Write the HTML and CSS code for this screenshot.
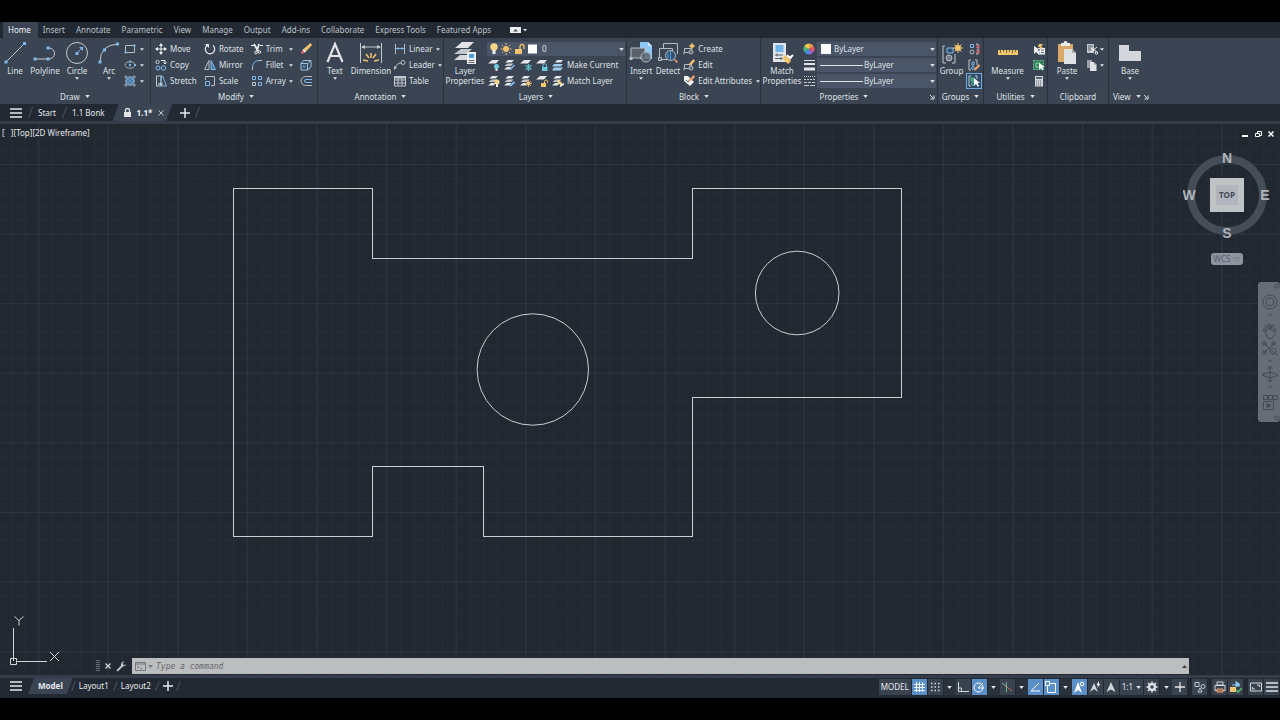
FILE: index.html
```html
<!DOCTYPE html>
<html lang="en">
<head>
<meta charset="utf-8">
<title>1.1 - CAD drawing</title>
<link rel="stylesheet" href="styles.css">
</head>
<body>
<svg class="defs" aria-hidden="true">
  <symbol id="caret" viewBox="0 0 6 4"><path d="M0 0h6L3 4z" fill="currentColor"/></symbol>
  <symbol id="launch" viewBox="0 0 6 6"><path d="M1 1l3 3M5 1.500V5H1.500" fill="none" stroke="currentColor"/></symbol>
  <symbol id="menu" viewBox="0 0 12 10"><path d="M0 1h12M0 5h12M0 9h12" stroke="currentColor" stroke-width="1.500"/></symbol>
  <symbol id="plus" viewBox="0 0 10 10"><path d="M5 0v10M0 5h10" stroke="currentColor" stroke-width="1.500"/></symbol>
  <symbol id="sheets" viewBox="0 0 12 12"><path d="M4 1h6L7.500 3.500H1z" fill="#e6e8ea"/><path d="M3.500 4.500h6L7 7H.5z" fill="#c3c7cd"/><path d="M3 8h4.500l-2 2.500H0z" fill="#e6e8ea"/></symbol>
  <symbol id="blk" viewBox="0 0 12 12"><path d="M1.500 5.500h7v4h-7zM1 9v2.500" fill="none" stroke="#b8bdc4"/><circle cx="8" cy="9" r="2" fill="#59616d" stroke="#b8bdc4"/></symbol>
</svg>

<nav class="ribbon-tabs" aria-label="Ribbon">
  <button class="rtab active">Home</button><button class="rtab">Insert</button><button class="rtab">Annotate</button><button class="rtab">Parametric</button><button class="rtab">View</button><button class="rtab">Manage</button><button class="rtab">Output</button><button class="rtab">Add-ins</button><button class="rtab">Collaborate</button><button class="rtab">Express Tools</button><button class="rtab">Featured Apps</button>
  <button class="minimize" aria-label="Minimize ribbon"><svg width="17" height="6" viewBox="0 0 17 6"><path d="M0 0h11v6H0z" fill="#eceef0"/><path d="M3 4.500h5L5.500 2z" fill="#4b535f"/><path d="M13 2h4l-2 2.500z" fill="#e0e3e7"/></svg></button>
</nav>

<header class="ribbon">
  <section class="panel draw">
    <div class="tools">
      <button class="big"><svg width="24" height="24" viewBox="0 0 24 24"><path d="M3 21L21 3" stroke="#c3c8ce"/><path d="M1.500 19.500h3v3h-3zM20 1h3v3h-3z" fill="#7db9ec"/></svg><span>Line</span></button>
      <button class="big"><svg width="24" height="24" viewBox="0 0 24 24"><path d="M2 18h14a5.500 5.500 0 0 0 0-11" fill="none" stroke="#c3c8ce"/><path d="M.5 16.500h3v3h-3zM13.500 16.500h3v3h-3zM13.500 5.500h3v3h-3z" fill="#7db9ec"/></svg><span>Polyline</span></button>
      <button class="big wide"><svg width="24" height="24" viewBox="0 0 24 24"><circle cx="12" cy="12" r="10.500" fill="none" stroke="#c3c8ce"/><path d="M12 12l5-5" stroke="#7db9ec"/><path d="M10.500 11h3v3h-3zM14 6h4v4z" fill="#7db9ec"/></svg><span>Circle</span><svg class="caret"><use href="#caret"/></svg></button>
      <button class="big"><svg width="24" height="24" viewBox="0 0 24 24"><path d="M3 21Q3 4 21 3" fill="none" stroke="#c3c8ce"/><path d="M1.500 19.500h3v3h-3zM6 7.500h3v3H6zM19 1.500h3v3h-3z" fill="#7db9ec"/></svg><span>Arc</span><svg class="caret"><use href="#caret"/></svg></button>
      <div class="stack">
        <button class="small" aria-label="Rectangle"><svg class="ic" viewBox="0 0 12 12"><path d="M1.500 2.500h9v7h-9z" fill="none" stroke="#b8bdc4"/><path d="M.5 8.500h2v2h-2zM9.500 1.500h2v2h-2z" fill="#7db9ec"/></svg><svg class="caret end"><use href="#caret"/></svg></button>
        <button class="small" aria-label="Ellipse"><svg class="ic" viewBox="0 0 12 12"><ellipse cx="6" cy="6" rx="5" ry="3.200" fill="none" stroke="#a3a9b2"/><path d="M5 5h2v2H5zM10 5h2v2h-2zM5 1.500h2v2H5z" fill="#7db9ec"/></svg><svg class="caret end"><use href="#caret"/></svg></button>
        <button class="small" aria-label="Hatch"><svg class="ic" viewBox="0 0 12 12"><path d="M2 2h8v8H2z" fill="#4a7ba8"/><path d="M1 1l10 10M1 5l6 6M5 1l6 6M11 1L1 11M7 1L1 7M11 5l-6 6" stroke="#76aad8" stroke-width=".6"/><path d="M2 0v12M10 0v12M0 2h12M0 10h12" stroke="#a3a9b2" stroke-width=".8"/></svg><svg class="caret end"><use href="#caret"/></svg></button>
      </div>
    </div>
    <button class="title">Draw<svg class="caret"><use href="#caret"/></svg></button>
  </section>

  <section class="panel modify">
    <div class="tools">
      <div class="stack">
        <button class="small"><svg class="ic" viewBox="0 0 12 12"><path d="M6 1v10M1 6h10" stroke="#eef0f2"/><path d="M6 0l2 3H4zM6 12l2-3H4zM0 6l3-2v4zM12 6L9 4v4z" fill="#eef0f2"/></svg>Move</button>
        <button class="small"><svg class="ic" viewBox="0 0 12 12"><circle cx="2.500" cy="3" r="1.700" fill="none" stroke="#c3c8ce"/><circle cx="3" cy="9" r="2" fill="none" stroke="#7db9ec"/><circle cx="8.500" cy="9" r="2.200" fill="none" stroke="#7db9ec"/><path d="M6 1.500h4V5M8.500 3.500L10 5l1.500-1.500" fill="none" stroke="#eef0f2"/></svg>Copy</button>
        <button class="small"><svg class="ic" viewBox="0 0 12 12"><path d="M1.500 1v10H6V1z" fill="none" stroke="#c3c8ce"/><path d="M6 1h1.500l4 10H6z" fill="none" stroke="#7db9ec"/><path d="M3 9h5" stroke="#eef0f2"/></svg>Stretch</button>
      </div>
      <div class="stack">
        <button class="small"><svg class="ic" viewBox="0 0 12 12"><path d="M3 2.500a4.700 4.700 0 1 0 6 0" fill="none" stroke="#eef0f2" stroke-width="1.200"/><path d="M1 1h4v4z" fill="#eef0f2"/></svg>Rotate</button>
        <button class="small"><svg class="ic" viewBox="0 0 12 12"><path d="M5 1.500V10.500H.5z" fill="none" stroke="#b8bdc4"/><path d="M7 1.500v9h4.500z" fill="#4a7ba8" stroke="#7db9ec"/></svg>Mirror</button>
        <button class="small"><svg class="ic" viewBox="0 0 12 12"><path d="M1.500 5V1.500h9v9H7" fill="none" stroke="#b8bdc4"/><path d="M1.500 6.500h4v4h-4z" fill="none" stroke="#7db9ec"/></svg>Scale</button>
      </div>
      <div class="stack mid">
        <button class="small"><svg class="ic" viewBox="0 0 12 12"><path d="M0 2.500h3.500M9 2.500h3" stroke="#eef0f2"/><path d="M3 1l4 7M8 1L6 8" stroke="#eef0f2" stroke-width="1.700"/><circle cx="5" cy="9.500" r="1.300" fill="none" stroke="#eef0f2"/><circle cx="8.500" cy="9" r="1.300" fill="none" stroke="#eef0f2"/></svg>Trim<svg class="caret end"><use href="#caret"/></svg></button>
        <button class="small"><svg class="ic" viewBox="0 0 12 12"><path d="M1.500 11V8" stroke="#b8bdc4"/><path d="M1.500 8Q2 2 8 1.500" fill="none" stroke="#7db9ec"/><path d="M8 1.500h3" stroke="#b8bdc4"/></svg>Fillet<svg class="caret end"><use href="#caret"/></svg></button>
        <button class="small"><svg class="ic" viewBox="0 0 12 12" fill="none" stroke="#7db9ec"><path d="M1.500 1.500h3v3h-3zM7.500 1.500h3v3h-3zM7.500 7.500h3v3h-3z"/><path d="M1.500 7.500h3v3h-3z" stroke="#c3c8ce"/></svg>Array<svg class="caret end"><use href="#caret"/></svg></button>
      </div>
      <div class="stack">
        <button class="small" aria-label="Erase"><svg class="ic" viewBox="0 0 12 12"><path d="M10.500 0L12 2 6 8.500 3.500 6z" fill="#f3c46e"/><path d="M3.500 6L6 8.500 4.800 9.700 2.300 7.200z" fill="#fff"/><path d="M2.300 7.200l2.500 2.500L2 11 .8 10z" fill="#e5626a"/></svg></button>
        <button class="small" aria-label="Explode"><svg class="ic" viewBox="0 0 12 12"><path d="M1 4.500h6.500v6.500H1zM3.500 1.500H11V8M1 4.500l2.500-3M7.500 4.500l3.500-3M7.500 11L11 8" fill="none" stroke="#9cc4e6"/><path d="M2.500 6h3v3h-3z" fill="#4a7ba8"/></svg></button>
        <button class="small" aria-label="Offset"><svg class="ic" viewBox="0 0 12 12" fill="none"><path d="M12 1.500H5.500a4.500 4.500 0 0 0 0 9H12" stroke="#b8bdc4"/><path d="M12 4.500H6a1.500 1.500 0 0 0 0 3h6" stroke="#7db9ec"/></svg></button>
      </div>
    </div>
    <button class="title">Modify<svg class="caret"><use href="#caret"/></svg></button>
  </section>

  <section class="panel annotation">
    <div class="tools">
      <button class="big wide"><svg width="20" height="24" viewBox="0 0 20 24"><path d="M2.500 21L10 3l7.500 18M5 15h10" fill="none" stroke="#e2e4e7" stroke-width="2.200"/></svg><span>Text</span><svg class="caret"><use href="#caret"/></svg></button>
      <button class="big wider"><svg width="24" height="24" viewBox="0 0 24 24"><path d="M1.500 2v20M22.500 2v20M3 6h18" stroke="#c3c8ce"/><path d="M2 6l4-2v4zM22 6l-4-2v4z" fill="#c3c8ce"/><path d="M12 12v5M7 13l3 4M17 13l-3 4M4 19l5 1M20 19l-5 1" stroke="#f3c46e" stroke-width="1.500"/></svg><span>Dimension</span></button>
      <div class="stack">
        <button class="small"><svg class="ic" viewBox="0 0 12 12"><path d="M1.500 1v10M10.500 1v10" stroke="#b8bdc4"/><path d="M2 5.500h8" stroke="#7db9ec"/><path d="M2 5.500l2.500-1.500v3zM10 5.500L7.500 4v3z" fill="#7db9ec"/></svg>Linear<svg class="caret end"><use href="#caret"/></svg></button>
        <button class="small"><svg class="ic" viewBox="0 0 12 12"><path d="M1 10Q2 4 7.500 4" fill="none" stroke="#b8bdc4"/><circle cx="9" cy="3.500" r="2" fill="none" stroke="#b8bdc4"/><path d="M0 11V7l3 1.500z" fill="#b8bdc4"/></svg>Leader<svg class="caret end"><use href="#caret"/></svg></button>
        <button class="small"><svg class="ic" viewBox="0 0 12 12"><path d="M.5 1.500h11v9.500H.5zM.5 5h11M.5 8h11M4 3v8M8 3v8" fill="none" stroke="#c3c8ce"/><path d="M0 1h12v2.500H0z" fill="#c3c8ce"/></svg>Table</button>
      </div>
    </div>
    <button class="title">Annotation<svg class="caret"><use href="#caret"/></svg></button>
  </section>

  <section class="panel layers">
    <div class="tools">
      <button class="big wider"><svg width="24" height="24" viewBox="0 0 24 24"><path d="M9 1h12l-6 6H2z" fill="#e2e4e7"/><path d="M8 8h11l-5 5H1z" fill="#c3c8ce"/><path d="M7 14h8v5H1z" fill="#d6d9dd"/><path d="M14 11h9v12h-9z" fill="#eef0f2"/><path d="M16 13h5v4h-5z" fill="#4a9fe0"/><path d="M15.500 19.500h6M15.500 21.500h6" stroke="#59616d"/></svg><span>Layer<br>Properties</span></button>
      <div class="stack fill">
        <label class="combo layer-combo">
          <svg width="52" height="12" viewBox="0 0 52 12"><circle cx="5" cy="4" r="3.700" fill="#f7d488"/><path d="M3.500 7h3v4h-3z" fill="#eef0f2"/><circle cx="17" cy="6" r="3" fill="#f3c46e"/><path d="M17 0v2M17 10v2M11.500 6h2M20.500 6h2M13 2l1 1M20 9l1 1M21 2l-1 1M14 9l-1 1" stroke="#f3c46e"/><path d="M26 6h7v5h-7z" fill="#f3c46e"/><path d="M31 6V3.500a2 2 0 0 1 4 0V6" fill="none" stroke="#f3c46e" stroke-width="1.300"/><path d="M39 1.500h9v9h-9z" fill="#fff"/></svg>
          <select aria-label="Layer"><option>0</option></select><svg class="caret"><use href="#caret"/></svg>
        </label>
        <div class="row">
          <button class="small" aria-label="Layer off"><svg class="ic" viewBox="0 0 12 12"><path d="M4 1h7L8 4.500H0z" fill="#e2e4e7"/><circle cx="8.500" cy="7.500" r="2.500" fill="#6ccbe0"/><path d="M7.500 9.500h2V12h-2z" fill="#dfeff2"/></svg></button>
          <button class="small" aria-label="Isolate layer"><svg class="ic" viewBox="0 0 12 12"><use href="#sheets"/><path d="M6 11l4.500-5" stroke="#7db9ec" stroke-width="1.500"/></svg></button>
          <button class="small" aria-label="Freeze layer"><svg class="ic" viewBox="0 0 12 12"><path d="M4 1h7L8 4.500H0z" fill="#e2e4e7"/><path d="M8.500 5v7M5.500 6.500l6 4M5.500 10.500l6-4" stroke="#5cc0c4" stroke-width="1.500"/></svg></button>
          <button class="small" aria-label="Lock layer"><svg class="ic" viewBox="0 0 12 12"><path d="M4 1h7L8 4.500H0z" fill="#e2e4e7"/><path d="M6 8h5.500v4H6z" fill="#6ccbe0"/><path d="M7 8V6.500a1.700 1.700 0 0 1 3.500 0V8" fill="none" stroke="#6ccbe0"/></svg></button>
          <button class="small"><svg class="ic" viewBox="0 0 12 12"><path d="M5 1h6L9 3.500H3z" fill="#e2e4e7"/><path d="M2 5h9L8.500 7.500H0zM2 8.500h9L8.500 11.500H0z" fill="#9fd0ee"/></svg>Make Current</button>
        </div>
        <div class="row">
          <button class="small" aria-label="Turn all layers on"><svg class="ic" viewBox="0 0 12 12"><use href="#sheets"/><circle cx="9" cy="7" r="2.500" fill="#f7d488"/><path d="M8 9h2v3H8z" fill="#eef0f2"/></svg></button>
          <button class="small" aria-label="Unisolate layer"><svg class="ic" viewBox="0 0 12 12"><use href="#sheets"/><path d="M6 11l4.500-4" stroke="#7db9ec" stroke-width="2"/></svg></button>
          <button class="small" aria-label="Thaw all layers"><svg class="ic" viewBox="0 0 12 12"><use href="#sheets"/><circle cx="8.500" cy="8.500" r="2" fill="#f3c46e"/><path d="M8.500 5v7M5 8.500h7M6 6l5 5M11 6l-5 5" stroke="#f3c46e" stroke-width=".7"/></svg></button>
          <button class="small" aria-label="Unlock layer"><svg class="ic" viewBox="0 0 12 12"><path d="M4 1h7L8 4.500H0z" fill="#e2e4e7"/><path d="M5 8h5v4H5z" fill="#f3c46e"/><path d="M8.500 8V6.500a1.500 1.500 0 0 1 3 0V8" fill="none" stroke="#f3c46e"/></svg></button>
          <button class="small"><svg class="ic" viewBox="0 0 12 12"><use href="#sheets"/><path d="M6 6l4 4" stroke="#f7d488" stroke-width="2.500"/><path d="M8 11.500l4-3" stroke="#fff" stroke-width="1.500"/></svg>Match Layer</button>
        </div>
      </div>
    </div>
    <button class="title">Layers<svg class="caret"><use href="#caret"/></svg></button>
  </section>

  <section class="panel block">
    <div class="tools">
      <button class="big narrow"><svg width="24" height="24" viewBox="0 0 24 24"><path d="M11 1h8l4 4v13H11z" fill="#8cc8f4"/><path d="M19 1v4h4" fill="#d3eafa"/><path d="M2 7h14v10H2z" fill="#59616d" stroke="#b8bdc4"/><circle cx="17" cy="16" r="5" fill="#59616d" fill-opacity=".8" stroke="#b8bdc4"/><path d="M.5 16h3v3h-3z" fill="#b8bdc4"/></svg><span>Insert</span><svg class="caret"><use href="#caret"/></svg></button>
      <button class="big narrow"><svg width="24" height="24" viewBox="0 0 24 24"><path d="M7.500 7V2.500h14V13M3.500 7.500h13v11h-13z" fill="none" stroke="#b8bdc4"/><path d="M2.500 16.500h3v3h-3z" fill="#59616d" stroke="#b8bdc4"/><circle cx="14.500" cy="14.500" r="5" fill="#35506e" stroke="#b8bdc4"/><path d="M14.500 10v9M12 12v5" stroke="#4a9fe0"/><path d="M18.500 18.500l3 3" stroke="#f3a46e" stroke-width="1.500"/></svg><span>Detect</span></button>
      <div class="stack">
        <button class="small"><svg class="ic" viewBox="0 0 12 12"><use href="#blk"/><circle cx="9" cy="3" r="2" fill="#f3c46e"/><path d="M9 0v6M6 3h6" stroke="#f3c46e"/></svg>Create</button>
        <button class="small"><svg class="ic" viewBox="0 0 12 12"><use href="#blk"/><path d="M10.500 0L12 2 8 6 6 6.500V5z" fill="#f3c46e"/></svg>Edit</button>
        <button class="small"><svg class="ic" viewBox="0 0 12 12"><path d="M1 1h4l6 6-4 4-6-5z" fill="#eef0f2"/><path d="M3 5l2 2 3-4" fill="none" stroke="#59616d"/><path d="M10.500 0L12 2 8 6 6 6.500V5z" fill="#f3a46e"/></svg>Edit Attributes<svg class="caret end"><use href="#caret"/></svg></button>
      </div>
    </div>
    <button class="title">Block<svg class="caret"><use href="#caret"/></svg></button>
  </section>

  <section class="panel properties">
    <div class="tools">
      <button class="big match"><svg width="24" height="24" viewBox="0 0 24 24"><path d="M3 2h13v19H3z" fill="#e2e4e7"/><path d="M5.500 4h8v7h-8z" fill="#6db5ea"/><path d="M5 14h8M5 17.500h8M7 12.500v3M11 16v3" stroke="#59616d"/><path d="M12 17l4-3 5 6-3 3z" fill="#f3c46e"/><path d="M17 14l4 4M23 14l-3 3" stroke="#fff" stroke-width="2"/></svg><span>Match<br>Properties</span></button>
      <div class="stack fill">
        <div class="row"><svg class="ic" viewBox="0 0 12 12"><path d="M6 6V.5A5.500 5.500 0 0 1 10.800 3.200z" fill="#f39a4a"/><path d="M6 6l4.800-2.800a5.500 5.500 0 0 1 0 5.600z" fill="#e35a63"/><path d="M6 6l4.800 2.800A5.500 5.500 0 0 1 6 11.500z" fill="#9a63c9"/><path d="M6 6v5.500a5.500 5.500 0 0 1-4.800-2.700z" fill="#3f8fdd"/><path d="M6 6L1.200 8.800a5.500 5.500 0 0 1 0-5.600z" fill="#49bb7b"/><path d="M6 6L1.200 3.200A5.500 5.500 0 0 1 6 .5z" fill="#f0cf55"/></svg>
          <label class="combo"><svg width="14" height="12" viewBox="0 0 14 12"><path d="M2 1h10v10H2z" fill="#fff"/></svg><select aria-label="Object color"><option>ByLayer</option></select><svg class="caret"><use href="#caret"/></svg></label></div>
        <div class="row"><svg class="ic" viewBox="0 0 12 12" stroke="#e2e4e7"><path d="M1 1.500h11"/><path d="M1 5h11" stroke-width="2"/><path d="M1 10h11" stroke-width="3"/></svg>
          <label class="combo"><svg width="44" height="12" viewBox="0 0 44 12"><path d="M1 6.500h43" stroke="#e2e4e7"/></svg><select aria-label="Lineweight"><option>ByLayer</option></select><svg class="caret"><use href="#caret"/></svg></label></div>
        <div class="row"><svg class="ic" viewBox="0 0 12 12" stroke="#c3c8ce"><path d="M1 1.500h11" stroke-dasharray="1 1"/><path d="M1 4.500h11" stroke-dasharray="2 1"/><path d="M1 7.500h11" stroke-dasharray="3 1"/><path d="M1 10.500h11" stroke-dasharray="5 1"/></svg>
          <label class="combo"><svg width="44" height="12" viewBox="0 0 44 12"><path d="M1 6.500h43" stroke="#e2e4e7"/></svg><select aria-label="Linetype"><option>ByLayer</option></select><svg class="caret"><use href="#caret"/></svg></label></div>
      </div>
    </div>
    <div class="title-row"><button class="title">Properties<svg class="caret"><use href="#caret"/></svg></button><button class="launcher" aria-label="Properties palette"><svg width="6" height="6"><use href="#launch"/></svg></button></div>
  </section>

  <section class="panel groups">
    <div class="tools">
      <button class="big narrow"><svg width="24" height="24" viewBox="0 0 24 24"><path d="M5 5H3v17h3M12 22h3v-9" fill="none" stroke="#c3c8ce"/><path d="M7 7h6v5H7z" fill="#35506e" stroke="#7db9ec"/><circle cx="9" cy="17" r="3" fill="#777e88" stroke="#b8bdc4"/><circle cx="18" cy="7" r="3" fill="#f3c46e"/><path d="M18 2v10M13 7h10M14.500 3.500l7 7M21.500 3.500l-7 7" stroke="#f3c46e"/></svg><span>Group</span></button>
      <div class="stack">
        <button class="small" aria-label="Ungroup"><svg class="ic" viewBox="0 0 12 12" fill="none"><path d="M2.500 1.500h3v3h-3z" stroke="#7db9ec"/><circle cx="4" cy="9" r="2" stroke="#b8bdc4"/><path d="M8 1h2v10H8" stroke="#c3c8ce"/><path d="M8 2l4 3M12 2L8 5M8 7l4 3M12 7l-4 3" stroke="#e35a63"/></svg></button>
        <button class="small" aria-label="Group edit"><svg class="ic" viewBox="0 0 12 12" fill="none"><path d="M3 1H1v10h2M7 1h2v5" stroke="#c3c8ce"/><path d="M4 3h2v3H4z" stroke="#7db9ec"/><circle cx="5" cy="9" r="1.500" stroke="#7db9ec"/><path d="M11 5l1 2-4 4-2 .5.5-2z" fill="#f3a46e"/></svg></button>
        <button class="small on" aria-label="Group selection" aria-pressed="true"><svg class="ic" viewBox="0 0 12 12" fill="none"><path d="M3 1H1v10h2M7 1h2v3" stroke="#c3c8ce"/><path d="M3 3h3v3H3z" fill="#3a9a6a" stroke="#58c08d"/><circle cx="5" cy="9" r="1.500" stroke="#58c08d"/><path d="M6 3v8l2-2 2 3 1-1-1.500-3H12z" fill="#fff"/></svg></button>
      </div>
    </div>
    <button class="title">Groups<svg class="caret"><use href="#caret"/></svg></button>
  </section>

  <section class="panel utilities">
    <div class="tools">
      <button class="big measure"><svg width="24" height="24" viewBox="0 0 24 24"><path d="M2 9h20v5H2z" fill="#f3c46e"/><path d="M4.500 9v3M7.500 9v2M10.500 9v3M13.500 9v2M16.500 9v3M19.500 9v2" stroke="#7d693f"/></svg><span>Measure</span><svg class="caret"><use href="#caret"/></svg></button>
      <div class="stack">
        <button class="small" aria-label="Quick select"><svg class="ic" viewBox="0 0 12 12"><path d="M1 3v8l2-2 2 2V8l2-1zM5 5h7v6.500H5z" fill="#eef0f2"/><path d="M6 1l4 0-2 3h2l-4 3 1-3H5z" fill="#f3c46e"/><path d="M6 7h1M6 9.500h1" stroke="#4a9fe0"/><path d="M8 7h3M8 9.500h3" stroke="#59616d"/></svg></button>
        <button class="small" aria-label="Select all"><svg class="ic" viewBox="0 0 12 12"><path d="M.5 1.500h10v9H.5z" fill="#2f7a55" stroke="#58c08d" stroke-dasharray="2 1"/><path d="M3 4h4v4H3z" fill="none" stroke="#8fdcb4"/><path d="M6 4v7l2-2 1.500 2.500 1-1L9.500 8H12z" fill="#fff"/></svg></button>
        <button class="small" aria-label="Calculator"><svg class="ic" viewBox="0 0 12 12"><path d="M2 1h8v10.500H2z" fill="#d3d6da"/><path d="M3 2h6v2H3z" fill="#59616d"/><path d="M3 6h6M3 8h6M3 10h6" stroke="#59616d" stroke-dasharray="1 1"/></svg></button>
      </div>
    </div>
    <button class="title">Utilities<svg class="caret"><use href="#caret"/></svg></button>
  </section>

  <section class="panel clipboard">
    <div class="tools">
      <button class="big paste"><svg width="24" height="24" viewBox="0 0 24 24"><path d="M3 3h15v18H3z" fill="#d9a866"/><path d="M6 2h2.500a2 2 0 0 1 4 0H15v3H6z" fill="#eef0f2"/><path d="M9 8h8l4 4v11H9z" fill="#dfe1e4"/><path d="M17 8v4h4z" fill="#a8adb5"/></svg><span>Paste</span><svg class="caret"><use href="#caret"/></svg></button>
      <div class="stack">
        <button class="small" aria-label="Cut"><svg class="ic" viewBox="0 0 12 12"><path d="M1 1h7v9H1z" fill="#c3c8ce"/><path d="M2 3h5M2 5h4M2 7h3" stroke="#59616d"/><path d="M5 5l6 4M5 9l6-5" stroke="#eef0f2"/><circle cx="10.500" cy="10" r="1.300" fill="none" stroke="#eef0f2"/></svg><svg class="caret end"><use href="#caret"/></svg></button>
        <button class="small" aria-label="Copy clip"><svg class="ic" viewBox="0 0 12 12"><path d="M1 1h5v8H1z" fill="#9aa0a9"/><path d="M4 3h4l2.500 2.500V12H4z" fill="#dfe1e4"/><path d="M8 3v2.500h2.500" fill="#8b929c"/></svg><svg class="caret end"><use href="#caret"/></svg></button>
      </div>
    </div>
    <div class="title">Clipboard</div>
  </section>

  <section class="panel view">
    <div class="tools">
      <button class="big base"><svg width="24" height="24" viewBox="0 0 24 24"><path d="M1 4h10v6h12v10H1z" fill="#d3d6da"/></svg><span>Base</span><svg class="caret"><use href="#caret"/></svg></button>
    </div>
    <div class="title-row"><button class="title">View<svg class="caret"><use href="#caret"/></svg></button><button class="launcher" aria-label="View settings"><svg width="6" height="6"><use href="#launch"/></svg></button></div>
  </section>
</header>

<nav class="file-tabs" aria-label="Drawings">
  <button class="burger" aria-label="Menu"><svg width="12" height="10"><use href="#menu"/></svg></button>
  <button class="ftab">Start</button>
  <button class="ftab">1.1 Bonk</button>
  <button class="ftab current"><svg width="7" height="9" viewBox="0 0 7 9"><path d="M0 4h7v5H0z" fill="#e2e4e7"/><path d="M1.500 4V2.500a2 2 0 0 1 4 0V4" fill="none" stroke="#e2e4e7" stroke-width="1.300"/></svg>1.1*<svg class="close" width="6" height="6" viewBox="0 0 6 6"><path d="M.5.5l5 5M5.500.5l-5 5" stroke="#c3c8ce"/></svg></button>
  <button class="add" aria-label="New drawing"><svg width="10" height="10"><use href="#plus"/></svg></button>
</nav>

<main class="canvas">
  <svg class="drawing" role="img" aria-label="Plate outline with two holes">
    <defs>
      <pattern id="minor" x="38.300" y="40" width="13.920" height="13.920" patternUnits="userSpaceOnUse"><path d="M0 .5h14M.5 0v14" stroke="#252d37"/></pattern>
      <pattern id="major" x="38" y="40" width="69.600" height="69.600" patternUnits="userSpaceOnUse"><path d="M0 .5h70M.5 0v70" stroke="#2c3540"/></pattern>
    </defs>
    <rect width="100%" height="100%" fill="url(#minor)"/>
    <rect width="100%" height="100%" fill="url(#major)"/>
    <g fill="none" stroke="#cbced2">
      <path d="M233.500 64.500h139v70h320v-70h209v209h-209v139h-209v-70h-111v70h-139z" shape-rendering="crispEdges"/>
      <circle cx="532.800" cy="245.500" r="55.700"/>
      <circle cx="797.200" cy="169" r="41.800"/>
    </g>
    <g fill="none" stroke="#d3d6da">
      <path d="M13.500 504v33M17 537.500h30M10.500 534.500h6v6h-6z"/>
      <path d="M14.500 492.500l4.500 4 4.500-4M19 496.500v5M50 528l9 9M59 528l-9 9"/>
    </g>
  </svg>
  <div class="view-label">[&nbsp;&nbsp; ][Top][2D Wireframe]</div>
  <div class="window-controls">
    <button aria-label="Minimize"><svg width="8" height="8" viewBox="0 0 8 8"><path d="M1 6h6" stroke="#fff" stroke-width="2"/></svg></button>
    <button aria-label="Restore"><svg width="8" height="8" viewBox="0 0 8 8"><path d="M1.500 3.500h4v3h-4zM3.500 3V1.500h4v4H6" fill="none" stroke="#fff"/></svg></button>
    <button aria-label="Close"><svg width="8" height="8" viewBox="0 0 8 8"><path d="M1.500 1.500l5 5M6.500 1.500l-5 5" stroke="#fff" stroke-width="1.500"/></svg></button>
  </div>
  <div class="viewcube">
    <svg width="88" height="90" viewBox="0 0 88 90">
      <circle cx="44" cy="45" r="36" fill="none" stroke="#454d58" stroke-width="8"/>
      <path d="M27 28h34v34H27z" fill="#bfc3c6"/><path d="M33 35h22v20H33z" fill="#b1b5be"/>
      <g class="compass"><text x="44" y="13">N</text><text x="44" y="88">S</text><text x="6" y="50">W</text><text x="82" y="50">E</text></g>
      <text class="face" x="44" y="48">TOP</text>
    </svg>
    <button class="wcs">WCS<svg width="7" height="4" viewBox="0 0 8 4"><path d="M0 .5h8L4 4z" fill="none" stroke="#7c828d"/></svg></button>
  </div>
  <aside class="navbar" aria-label="Navigation bar">
    <svg width="20" height="140" viewBox="0 0 20 140" fill="none" stroke="#434b56">
      <circle cx="17" cy="4" r="2"/><circle cx="10" cy="20" r="7"/><circle cx="10" cy="20" r="4"/>
      <path d="M8.500 33h4M8.500 79h4M8.500 105h4"/>
      <path d="M6 52l-3-4 1-1 3 3-2-6 1.500-.5L9 48l-.5-6H10l1 6 1-5 1.500.5-.5 6 2-3 1 1-2 6-2 3H8z"/>
      <path d="M4 61l10 10M14 61L4 71M3 60h3v3H3zM12 60h3v3h-3zM3 69h3v3H3z"/><circle cx="13" cy="69" r="3"/><path d="M15 71l3 3"/>
      <path d="M10 84v16M7.500 87L10 84l2.500 3M7.500 97l2.500 3 2.500-3M2 93q8-5 16 0M2 93q8 5 16 0M4 91l-2 2 3 1"/>
      <path d="M3.500 113.500h4v4h-4zM8.500 113.500h4v4h-4zM13.500 113.500h4v4h-4zM3.500 119.500h10v8h-10z"/><path d="M7 121.500l4 2-4 2z" fill="#434b56"/>
      <circle cx="17" cy="136" r="2"/>
    </svg>
  </aside>
  <div class="command">
    <svg width="4" height="12" viewBox="0 0 4 12"><path d="M1 0v12M3 0v12" stroke="#aeb3ba" stroke-dasharray="1 1"/></svg>
    <button aria-label="Close command line"><svg width="6" height="6" viewBox="0 0 6 6"><path d="M.5.5l5 5M5.500.5l-5 5" stroke="#d3d6da" stroke-width="1.200"/></svg></button>
    <button aria-label="Customize"><svg width="11" height="11" viewBox="0 0 10 10"><path d="M1 9l5-5" stroke="#c3c8ce" stroke-width="1.800"/><path d="M9.500 2.500L7.500 4 6 2.500 7.500.5A3 3 0 0 0 4.500 4 3 3 0 0 0 9.500 2.500z" fill="#c3c8ce"/></svg></button>
    <div class="prompt">
      <svg width="18" height="9" viewBox="0 0 18 9"><path d="M.5.5h10v8H.5zM.5 2h10" fill="none" stroke="#74777b"/><path d="M2.500 4l1.500 1-1.500 1M5 6.500h2" fill="none" stroke="#74777b"/><path d="M13 3h5l-2.500 3z" fill="#74777b"/></svg>
      <input type="text" aria-label="Command" placeholder="Type a command">
      <svg width="5" height="3" viewBox="0 0 5 3"><path d="M0 3h5L2.500 0z" fill="#40444a"/></svg>
    </div>
  </div>
</main>

<footer class="status">
  <nav class="layouts" aria-label="Layouts">
    <button class="burger" aria-label="Layout menu"><svg width="12" height="10"><use href="#menu"/></svg></button>
    <button class="ltab current">Model</button><button class="ltab">Layout1</button><button class="ltab">Layout2</button>
    <button class="add" aria-label="New layout"><svg width="10" height="10"><use href="#plus"/></svg></button>
  </nav>
  <div class="toggles">
    <button class="st model">MODEL</button>
    <button class="st on" aria-label="Grid"><svg viewBox="0 0 12 12"><path d="M3.500 1v10M6.500 1v10M9.500 1v10M1 3.500h11M1 6.500h11M1 9.500h11" stroke="#fff" stroke-width=".9"/></svg></button>
    <button class="st" aria-label="Snap"><svg viewBox="0 0 12 12"><path d="M2 2.500h10M2 6h10M2 9.500h10" stroke="#d3d6da" stroke-width="1.500" stroke-dasharray="1.500 2"/></svg></button>
    <button class="dd" aria-label="Snap options"><svg class="caret"><use href="#caret"/></svg></button>
    <button class="st" aria-label="Ortho"><svg viewBox="0 0 12 12"><path d="M1.500 1v9.500H12M1.500 7H4.500v3" fill="none" stroke="#d3d6da"/></svg></button>
    <button class="st on" aria-label="Polar"><svg viewBox="0 0 12 12"><circle cx="5.500" cy="6.500" r="4.500" fill="none" stroke="#fff"/><path d="M5 7l5-5M5 7h6" stroke="#fff"/></svg></button>
    <button class="dd" aria-label="Polar options"><svg class="caret"><use href="#caret"/></svg></button>
    <button class="st" aria-label="Isodraft"><svg viewBox="0 0 12 12"><path d="M5.500 1v10" stroke="#6fae7f"/><path d="M1 2l5 4" stroke="#a7aeb7"/><path d="M6 6l5 4" stroke="#d06a60"/></svg></button>
    <button class="dd" aria-label="Isodraft options"><svg class="caret"><use href="#caret"/></svg></button>
    <button class="st on" aria-label="Object snap tracking"><svg viewBox="0 0 12 12"><path d="M10 2L2 10h9" fill="none" stroke="#fff"/></svg></button>
    <button class="st on" aria-label="Object snap"><svg viewBox="0 0 12 12"><path d="M2.500 2.500h8v9h-8z" fill="none" stroke="#fff"/><path d="M.5.5h4v4h-4z" fill="#5b8fc7" stroke="#fff"/></svg></button>
    <button class="dd" aria-label="Snap modes"><svg class="caret"><use href="#caret"/></svg></button>
    <button class="st on" aria-label="Annotation visibility"><svg viewBox="0 0 12 12"><path d="M5 1l4 11-4-3-4 3z" fill="#fff"/><circle cx="9" cy="3" r="1.800" fill="none" stroke="#fff"/></svg></button>
    <button class="st" aria-label="Auto scale"><svg viewBox="0 0 12 12"><path d="M5 2l4 9-4-3-4 3z" fill="#d3d6da"/><path d="M10 0L7.500 4H9L8 7l3.500-4H10z" fill="#fff"/></svg></button>
    <button class="st" aria-label="Annotation scale"><svg viewBox="0 0 12 12"><path d="M6 1l4.500 10L6 8.500 1.500 11z" fill="#d3d6da"/></svg></button>
    <button class="st ratio">1:1<svg class="caret"><use href="#caret"/></svg></button>
    <button class="st" aria-label="Workspace"><svg viewBox="0 0 12 12"><circle cx="6" cy="6" r="3" fill="none" stroke="#e2e4e7" stroke-width="2"/><path d="M6 .5v11M.5 6h11M2 2l8 8M10 2l-8 8" stroke="#e2e4e7" stroke-width="1.500"/><circle cx="6" cy="6" r="1.800" fill="#39424f"/></svg></button>
    <button class="dd" aria-label="Workspace options"><svg class="caret"><use href="#caret"/></svg></button>
    <button class="st" aria-label="Annotation monitor"><svg viewBox="0 0 12 12"><path d="M6 1v10M1 6h10" stroke="#e2e4e7" stroke-width="1.300"/></svg></button>
    <button class="st gap" aria-label="Isolate objects"><svg viewBox="0 0 12 12"><path d="M1 1.500h4v4H1zM4 11l2-4 2 4z" fill="none" stroke="#c3c8ce"/><circle cx="9" cy="5.500" r="2" fill="none" stroke="#c3c8ce"/></svg></button>
    <button class="st gap" aria-label="Plot"><svg viewBox="0 0 12 12"><path d="M3 1h6v3H3zM1 4.500h10v5H1z" fill="none" stroke="#d3d6da"/><path d="M3 8h6v3H3z" fill="#8b6c5b" stroke="#f0a070"/></svg></button>
    <button class="st" aria-label="Hardware acceleration"><svg viewBox="0 0 12 12"><path d="M6 1a3.500 3.500 0 0 1 3.500 4.500H6z" fill="#8cc8f4"/><path d="M2 4h8M6 0v6" stroke="#8cc8f4"/><path d="M0 6h6v5H0z" fill="#f3c46e"/><path d="M6 9l2 2 4-4" fill="none" stroke="#58c06d" stroke-width="1.500"/></svg></button>
    <button class="st gap" aria-label="Clean screen"><svg viewBox="0 0 12 12"><path d="M.5 2h11v8H.5z" fill="none" stroke="#d3d6da"/><path d="M7 4h2.500v2M5 8H2.500V6" fill="none" stroke="#d3d6da"/></svg></button>
    <button class="st" aria-label="Customization"><svg viewBox="0 0 12 12"><path d="M0 2h12M0 6h12M0 10h12" stroke="#e2e4e7" stroke-width="1.300"/></svg></button>
  </div>
</footer>
</body>
</html>
```

FILE: styles.css
```css
* { box-sizing: border-box; }
body {
  margin: 0;
  min-height: 100vh;
  padding: 22px 0;
  display: flex;
  flex-direction: column;
  background: #000;
  color: #dfe2e6;
  font-family: "Noto Sans", "Open Sans", sans-serif;
  font-size: 8px;
  line-height: 10px;
}
button, select, input { font: inherit; color: inherit; background: none; border: 0; padding: 0; margin: 0; }
button { white-space: nowrap; }
svg { display: block; flex: none; }
.defs { position: absolute; width: 0; height: 0; }
.caret { width: 5px; height: 3px; }

.ribbon-tabs { display: flex; align-items: stretch; height: 16px; padding-left: 3px; background: #222933; color: #bcc2ca; }
.rtab { padding: 0 6px 0 5px; }
.rtab.active { padding-right: 7px; background: #3b4453; color: #f2f4f6; }
.minimize { margin-left: 13px; }

.ribbon { display: flex; height: 66px; background: #3b4453; }
.panel { display: flex; flex-direction: column; flex: none; border-right: 1px solid #2a323d; }
.panel.view { flex: 1; border-right: 0; align-items: flex-start; }
.tools { display: flex; height: 52px; padding-top: 3px; }
.draw { width: 151px; }
.modify { width: 167px; padding-left: 4px; }
.annotation { width: 126px; }
.layers { width: 183px; padding-left: 2px; }
.block { width: 134px; padding-left: 1px; }
.properties { width: 177px; }
.groups { width: 46px; }
.utilities { width: 64px; }
.clipboard { width: 61px; }

.big { display: flex; flex-direction: column; align-items: center; width: 30px; }
.big > svg:first-child { margin-bottom: 1px; }
.big .caret { width: 4px; height: 3px; margin-top: 1px; }
.big.wide { width: 34px; }
.big.wider { width: 38px; }
.big.narrow { width: 27px; }
.big.match { width: 42px; }
.big.measure { width: 48px; }
.big.paste { width: 38px; }
.big.base { width: 42px; }

.stack { display: flex; flex-direction: column; }
.stack.fill { flex: 1; min-width: 0; padding: 0 1px 0 3px; }
.properties .stack.fill { padding-left: 0; }
.small { display: flex; align-items: center; gap: 3px; height: 16px; }
.ic { width: 12px; height: 12px; }
.small .end { width: 4px; height: 3px; margin-left: 1px; }
.modify .tools { justify-content: space-between; padding-right: 5px; }
.modify .mid { width: 42px; }
.annotation .stack { width: 44px; }
.modify .mid .end, .annotation .end { margin-left: auto; }
.annotation .stack { margin-left: 4px; }
.block .stack { margin-left: 2px; }
.groups .stack { margin-left: 1px; }
.groups .small, .utilities .small { justify-content: center; width: 16px; }
.clipboard .small { gap: 1px; }
.small.on { background: #2f4a66; outline: 1px solid #6fa8dc; outline-offset: -1px; }
.row { display: flex; align-items: center; height: 16px; }
.layers .row { gap: 4px; padding-left: 1px; }
.properties .row { gap: 2px; }

.combo { display: flex; align-items: center; flex: 1; height: 14px; padding: 0 1px 0 2px; gap: 1px; background: #4a5568; min-width: 0; }
.combo select { flex: 1; min-width: 0; appearance: none; }
.layer-combo { flex: none; margin: 1px 0; }

.title { display: flex; align-items: center; justify-content: center; gap: 5px; height: 13px; width: 100%; }
.title-row { display: flex; align-items: center; width: 100%; }
.launcher { padding: 0 2px; }
.view .title { width: auto; padding-left: 4px; }

.file-tabs { display: flex; align-items: stretch; height: 20px; padding-left: 10px; background: #222933; border-bottom: 3px solid #343d49; color: #e6e9ec; }
.burger { width: 12px; display: flex; align-items: center; margin-right: 8px; }
.ftab, .ltab, .add { display: flex; align-items: center; padding: 0 8px; position: relative; }
.ftab::before, .add::before, .add::after, .ltab + .ltab::after {
  content: ""; position: absolute; left: 0; top: 3px; bottom: 3px; width: 1px; background: #4b5461; transform: skewX(-20deg);
}
.add::after { left: auto; right: 0; }
.ftab.current { gap: 6px; padding: 0 8px 0 11px; color: #f2f4f6; font-weight: 700; background: #3b4453; clip-path: polygon(6px 0, 100% 0, calc(100% - 6px) 100%, 0 100%); }
.ftab.current::before, .ftab.current + .add::before, .layouts .ltab.current + .ltab::before { display: none; }

.canvas { flex: 1; position: relative; background: #212830; overflow: hidden; min-height: 300px; }
.drawing { position: absolute; inset: 0; width: 100%; height: 100%; }
.view-label { position: absolute; left: 2px; top: 4px; color: #e6e9ec; }
.window-controls { position: absolute; top: 6px; right: 5px; display: flex; gap: 5px; }
.viewcube { position: absolute; top: 26px; right: 9px; display: flex; flex-direction: column; align-items: center; gap: 13px; }
.compass { font: 700 14px "Liberation Sans", sans-serif; fill: #b0b4ba; text-anchor: middle; }
.face { font-weight: 700; fill: #444b57; text-anchor: middle; }
.wcs { display: flex; align-items: center; gap: 3px; height: 12px; padding: 0 3px; border-radius: 3px; background: #8d939f; color: #5a616d; }
.navbar { position: absolute; right: 0; top: 158px; padding-left: 2px; border-radius: 3px; background: #676d76; }
.command { position: absolute; left: 96px; right: 91px; bottom: 1px; height: 16px; display: flex; align-items: center; gap: 5px; }
.prompt { flex: 1; display: flex; align-items: center; gap: 3px; height: 16px; padding: 0 2px 0 3px; background: #bcbdbf; }
.prompt input { flex: 1; min-width: 0; outline: 0; font: italic 8px "DejaVu Sans Mono", monospace; color: #55585d; }
.prompt input::placeholder { color: #66696d; opacity: 1; }

.status { display: flex; justify-content: space-between; height: 23px; border-top: 3px solid #343d49; background: #222933; color: #e6e9ec; }
.layouts { display: flex; padding: 0 0 4px 10px; }
.status .burger { margin-right: 6px; }
.status .ltab, .status .add { padding: 0 6px; }
.status .ltab.current { padding: 0 10px; font-weight: 700; background: #3b4453; clip-path: polygon(6px 0, 100% 0, calc(100% - 6px) 100%, 0 100%); }
.toggles { display: flex; align-items: center; padding-bottom: 2px; }
.st { display: flex; align-items: center; justify-content: center; width: 16px; height: 16px; background: #39424f; border-right: 1px solid #222933; }
.st > svg:not(.caret) { width: 12px; height: 12px; }
.st.on { background: #5b8fc7; }
.st.model { width: auto; padding: 0 2px; }
.st.ratio { width: auto; padding: 0 2px; gap: 3px; }
.st.gap { margin-left: 4px; }
.dd { display: flex; align-items: center; justify-content: center; width: 12px; height: 16px; background: #2a323d; }
```
